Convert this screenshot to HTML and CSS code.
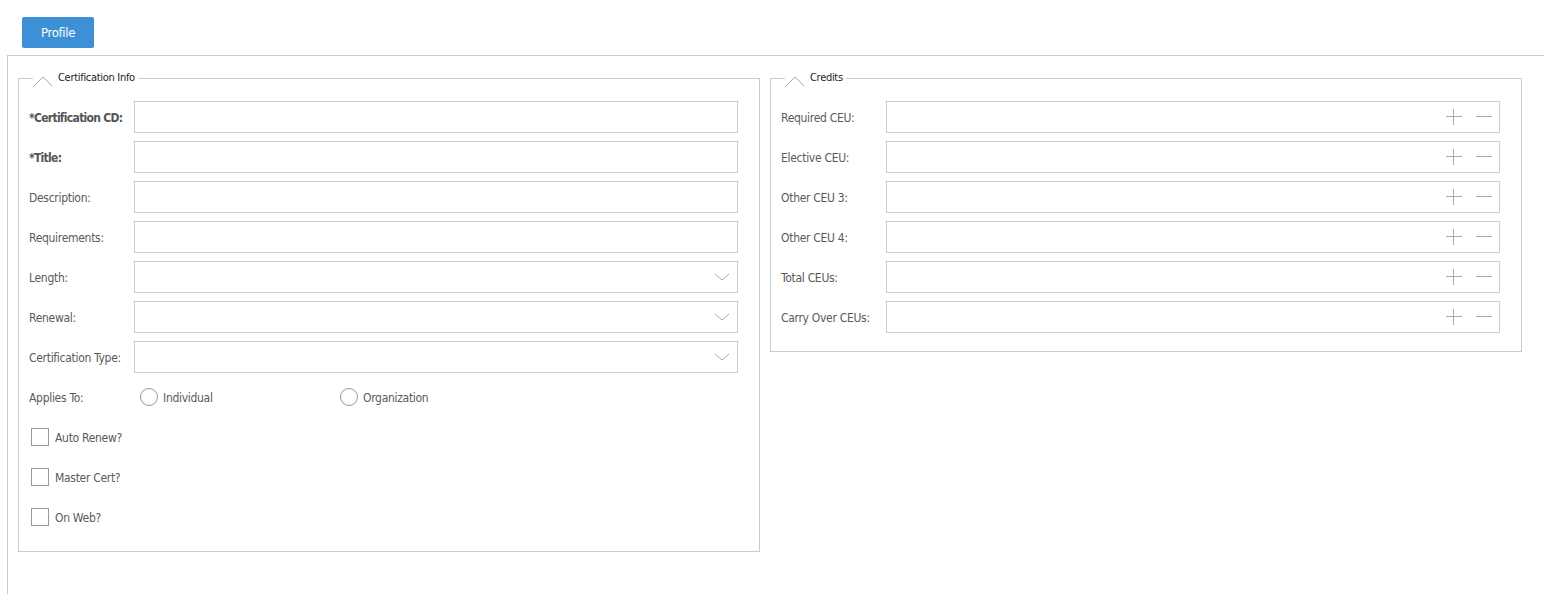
FILE: index.html
```html
<!DOCTYPE html>
<html lang="en">
<head>
    <meta charset="UTF-8">
    <title>Certification</title>
    <link rel="stylesheet" href="styles.css">
</head>
<body>
    <div class="tabs">
        <button class="tab-btn">Profile</button>
    </div>

    <div class="panel">
        <fieldset class="group group-left">
            <legend><svg class="chev" width="20" height="12" viewBox="0 0 20 12"><path d="M1 11 L10 2 L19 11" fill="none" stroke="#aaa" stroke-width="1"/></svg>Certification Info</legend>

            <div class="row">
                <label class="req">*Certification CD:</label>
                <input class="field" type="text">
            </div>
            <div class="row">
                <label class="req">*Title:</label>
                <input class="field" type="text">
            </div>
            <div class="row">
                <label>Description:</label>
                <input class="field" type="text">
            </div>
            <div class="row">
                <label>Requirements:</label>
                <input class="field" type="text">
            </div>
            <div class="row">
                <label>Length:</label>
                <div class="field select"><svg width="16" height="10" viewBox="0 0 16 10"><path d="M1 2 L8 8 L15 2" fill="none" stroke="#aaa" stroke-width="1"/></svg></div>
            </div>
            <div class="row">
                <label>Renewal:</label>
                <div class="field select"><svg width="16" height="10" viewBox="0 0 16 10"><path d="M1 2 L8 8 L15 2" fill="none" stroke="#aaa" stroke-width="1"/></svg></div>
            </div>
            <div class="row">
                <label>Certification Type:</label>
                <div class="field select"><svg width="16" height="10" viewBox="0 0 16 10"><path d="M1 2 L8 8 L15 2" fill="none" stroke="#aaa" stroke-width="1"/></svg></div>
            </div>
            <div class="row">
                <label>Applies To:</label>
                <div class="radios">
                    <span class="radio"><span class="circle"></span><span class="opt">Individual</span></span>
                    <span class="radio"><span class="circle"></span><span class="opt">Organization</span></span>
                </div>
            </div>
            <div class="row check-row">
                <span class="box"></span><span class="opt">Auto Renew?</span>
            </div>
            <div class="row check-row">
                <span class="box"></span><span class="opt">Master Cert?</span>
            </div>
            <div class="row check-row">
                <span class="box"></span><span class="opt">On Web?</span>
            </div>
        </fieldset>

        <fieldset class="group group-right">
            <legend><svg class="chev" width="20" height="12" viewBox="0 0 20 12"><path d="M1 11 L10 2 L19 11" fill="none" stroke="#aaa" stroke-width="1"/></svg>Credits</legend>

            <div class="row">
                <label>Required CEU:</label>
                <div class="field spin"><span class="plus"></span><span class="minus"></span></div>
            </div>
            <div class="row">
                <label>Elective CEU:</label>
                <div class="field spin"><span class="plus"></span><span class="minus"></span></div>
            </div>
            <div class="row">
                <label>Other CEU 3:</label>
                <div class="field spin"><span class="plus"></span><span class="minus"></span></div>
            </div>
            <div class="row">
                <label>Other CEU 4:</label>
                <div class="field spin"><span class="plus"></span><span class="minus"></span></div>
            </div>
            <div class="row">
                <label>Total CEUs:</label>
                <div class="field spin"><span class="plus"></span><span class="minus"></span></div>
            </div>
            <div class="row">
                <label>Carry Over CEUs:</label>
                <div class="field spin"><span class="plus"></span><span class="minus"></span></div>
            </div>
        </fieldset>
    </div>
</body>
</html>
```

FILE: styles.css
```css
body {
    margin: 0;
    font-family: "DejaVu Sans Condensed", "Liberation Sans", sans-serif;
    font-size: 12px;
    letter-spacing: -0.3px;
    color: #5a5a5a;
    background: #fff;
}

.tabs {
    height: 55px;
    padding: 17px 0 0 22px;
    box-sizing: border-box;
}

.tab-btn {
    width: 72px;
    height: 31px;
    border: none;
    border-radius: 2px;
    background: #3d8fd6;
    color: #fff;
    font-family: inherit;
    font-size: 13px;
    letter-spacing: -0.3px;
    padding: 0;
}

.panel {
    margin-left: 7px;
    border-top: 1px solid #ccc;
    border-left: 1px solid #ccc;
    min-height: 538px;
    display: grid;
    grid-template-columns: 742px 752px;
    column-gap: 10px;
    align-items: start;
    padding: 14px 0 0 10px;
}

.group {
    margin: 0;
    border: 1px solid #ccc;
    padding: 15px 21px 18px 10px;
    display: flex;
    flex-direction: column;
    gap: 8px;
    min-width: 0;
}

legend {
    margin-left: 4px;
    padding: 0 3px 0 0;
    font-size: 11px;
    line-height: 16px;
    color: #222;
    display: flex;
    align-items: center;
}

.chev {
    margin: 0 5px 0 0;
    position: relative;
    top: 3px;
}

.row {
    display: flex;
    align-items: center;
    height: 32px;
}

.row label {
    width: 105px;
    flex: none;
    white-space: nowrap;
    padding-top: 1px;
}

.row label.req {
    font-weight: bold;
    letter-spacing: -0.7px;
    color: #555;
}

.opt {
    padding-top: 2px;
}

.field {
    flex: 1;
    height: 32px;
    box-sizing: border-box;
    border: 1px solid #ccc;
    margin: 0;
    background: #fff;
}

.select {
    display: flex;
    align-items: center;
    justify-content: flex-end;
    padding-right: 7px;
}

.spin {
    display: flex;
    align-items: center;
    justify-content: flex-end;
    padding-right: 7px;
    gap: 14px;
}

.plus, .minus {
    width: 16px;
    height: 16px;
    position: relative;
}

.plus::before, .minus::before {
    content: "";
    position: absolute;
    left: 0;
    right: 0;
    top: 7px;
    height: 1px;
    background: #aaa;
}

.plus::after {
    content: "";
    position: absolute;
    top: 0;
    bottom: 0;
    left: 7px;
    width: 1px;
    background: #aaa;
}

.radios {
    display: flex;
    margin-left: 6px;
}

.radio {
    display: flex;
    align-items: center;
    width: 200px;
}

.circle {
    width: 16px;
    height: 16px;
    border: 1px solid #999;
    border-radius: 50%;
    margin-right: 5px;
}

.check-row {
    padding-left: 2px;
}

.box {
    width: 16px;
    height: 16px;
    border: 1px solid #999;
    margin-right: 6px;
}
```
